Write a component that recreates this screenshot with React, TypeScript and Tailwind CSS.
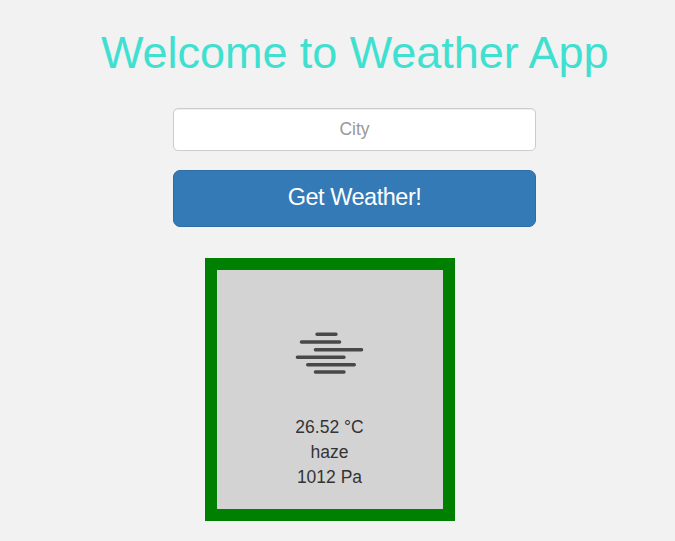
export default function App() {
  return (
    <main className="h-[541px] w-[675px] overflow-hidden bg-[#f2f2f2] pt-[26px] font-['Liberation_Sans',Arial,sans-serif] text-[#333]">
      <h1 className="ml-[101px] text-[45px] leading-[54px] tracking-[-0.05px] whitespace-nowrap text-[#40e0d0]">Welcome to Weather App</h1>
      <form className="mt-[28px] ml-[173px] w-[363px]">
        <input
          placeholder="City"
          className="block h-[43px] w-full rounded-[5px] border border-[#ccc] bg-white text-center text-[17.5px] shadow-[inset_0_1px_1px_rgba(0,0,0,0.075)] placeholder:text-[#999]"
        />
        <button
          type="button"
          className="mt-[19px] block h-[57px] w-full rounded-[7px] border border-[#2e6da4] bg-[#337ab7] pb-[1px] text-[23.5px] tracking-[-0.47px] text-white"
        >
          Get Weather!
        </button>
      </form>
      <section className="mt-[31px] ml-[205px] flex h-[263px] w-[250px] flex-col items-center border-[12px] border-[#008000] bg-[#d3d3d3] pt-[20px] pr-[1px] text-center text-[17.5px] leading-[25px]">
        <svg viewBox="0 0 125 125" className="h-[125px] w-[125px] shrink-0" stroke="#484848" strokeWidth="3.4" strokeLinecap="round">
          <path d="M50 44.2H69M34.4 52H72.6M48.4 59.8H94.6M30.4 67.3H77M40.7 74.7H87.3M48.4 82H77" />
        </svg>
        <p>26.52 °C</p>
        <p>haze</p>
        <p>1012 Pa</p>
      </section>
    </main>
  );
}
